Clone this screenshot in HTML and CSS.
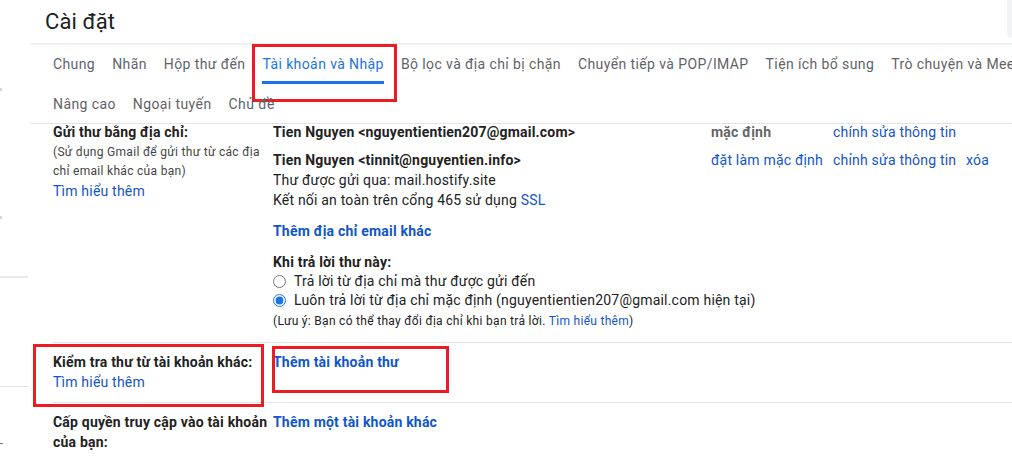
FILE: index.html
```html
<!DOCTYPE html>
<html lang="vi">
<head>
  <meta charset="UTF-8">
  <meta name="viewport" content="width=device-width, initial-scale=1.0">
  <title>Cài đặt</title>
  <link rel="stylesheet" href="styles.css">
</head>
<body>
  <div class="page">
    <!-- thanh bên trái (chỉ thấy mép) -->
    <aside class="rail">
      <span class="rail-dot rail-dot-top"></span>
      <span class="rail-dot rail-dot-mid"></span>
      <span class="rail-rule rail-rule-a"></span>
      <span class="rail-rule rail-rule-b"></span>
      <span class="rail-dash"></span>
    </aside>

    <main class="settings">
      <header class="settings-head">
        <h1>Cài đặt</h1>
        <div class="search-edge"></div>
      </header>

      <!-- các tab -->
      <nav class="tabs">
        <div class="tab-row">
          <a href="#" class="tab"><span class="tab-text">Chung</span></a>
          <a href="#" class="tab"><span class="tab-text">Nhãn</span></a>
          <a href="#" class="tab"><span class="tab-text">Hộp thư đến</span></a>
          <a href="#" class="tab tab-active"><span class="tab-text">Tài khoản và Nhập</span></a>
          <a href="#" class="tab"><span class="tab-text">Bộ lọc và địa chỉ bị chặn</span></a>
          <a href="#" class="tab"><span class="tab-text">Chuyển tiếp và POP/IMAP</span></a>
          <a href="#" class="tab"><span class="tab-text">Tiện ích bổ sung</span></a>
          <a href="#" class="tab"><span class="tab-text">Trò chuyện và Meet</span></a>
        </div>
        <div class="tab-row">
          <a href="#" class="tab"><span class="tab-text">Nâng cao</span></a>
          <a href="#" class="tab"><span class="tab-text">Ngoại tuyến</span></a>
          <a href="#" class="tab"><span class="tab-text">Chủ đề</span></a>
        </div>
      </nav>

      <!-- Gửi thư bằng địa chỉ -->
      <section class="opt opt-send">
        <div class="opt-label">
          <b class="label-title">Gửi thư bằng địa chỉ:</b>
          <p class="label-hint">(Sử dụng Gmail để gửi thư từ các địa chỉ email khác của bạn)</p>
          <a href="#" class="link link-block">Tìm hiểu thêm</a>
        </div>
        <div class="opt-body">
          <div class="acct acct-first">
            <div class="acct-name">Tien Nguyen &lt;nguyentientien207@gmail.com&gt;</div>
            <div class="acct-state">mặc định</div>
            <div><a href="#" class="link">chính sửa thông tin</a></div>
            <div></div>
          </div>
          <div class="acct">
            <div>
              <div class="acct-name">Tien Nguyen &lt;tinnit@nguyentien.info&gt;</div>
              <div>Thư được gửi qua: mail.hostify.site</div>
              <div>Kết nối an toàn trên cổng 465 sử dụng <a href="#" class="link">SSL</a></div>
            </div>
            <div><a href="#" class="link">đặt làm mặc định</a></div>
            <div><a href="#" class="link">chỉnh sửa thông tin</a></div>
            <div><a href="#" class="link">xóa</a></div>
          </div>
          <a href="#" class="link link-strong add-more">Thêm địa chỉ email khác</a>
          <div class="reply">
            <div class="reply-title">Khi trả lời thư này:</div>
            <label class="reply-option"><input type="radio" name="reply">Trả lời từ địa chỉ mà thư được gửi đến</label>
            <label class="reply-option"><input type="radio" name="reply" checked>Luôn trả lời từ địa chỉ mặc định (nguyentientien207@gmail.com hiện tại)</label>
            <p class="reply-note">(Lưu ý: Bạn có thể thay đổi địa chỉ khi bạn trả lời. <a href="#" class="link">Tìm hiểu thêm</a>)</p>
          </div>
        </div>
      </section>

      <!-- Kiểm tra thư từ tài khoản khác -->
      <section class="opt opt-check">
        <div class="opt-label marked">
          <b class="label-title">Kiểm tra thư từ tài khoản khác:</b>
          <a href="#" class="link link-block">Tìm hiểu thêm</a>
        </div>
        <div class="opt-body marked">
          <a href="#" class="link link-strong">Thêm tài khoản thư</a>
        </div>
      </section>

      <!-- Cấp quyền truy cập -->
      <section class="opt opt-grant">
        <div class="opt-label">
          <b class="label-title">Cấp quyền truy cập vào tài khoản của bạn:</b>
        </div>
        <div class="opt-body">
          <a href="#" class="link link-strong">Thêm một tài khoản khác</a>
        </div>
      </section>
    </main>
  </div>
</body>
</html>
```

FILE: styles.css
```css
/* reset */
* {
  margin: 0;
  padding: 0;
  box-sizing: border-box;
}
html,
body {
  overflow: hidden;
}
body {
  width: 1012px;
  height: 456px;
  font-family: Roboto, "Liberation Sans", Arial, sans-serif;
  font-size: 14px;
  letter-spacing: 0.2px;
  color: #222;
  background: #fff;
}
.page {
  display: flex;
  height: 456px;
}

/* thanh bên */
.rail {
  flex: none;
  width: 30px;
  display: flex;
  flex-direction: column;
  align-items: flex-start;
}
.rail span {
  display: block;
}
.rail-dot {
  width: 2px;
  height: 3px;
  background: #d5d5d5;
}
.rail-dot-top {
  margin-top: 88px;
}
.rail-dot-mid {
  margin-top: 125px;
}
.rail-rule {
  width: 28px;
  background: #e8e8e8;
}
.rail-rule-a {
  margin-top: 57px;
  height: 2px;
}
.rail-rule-b {
  margin-top: 108px;
  height: 1px;
  background: #e3e3e3;
}
.rail-dash {
  margin-top: 56px;
  width: 3px;
  height: 1px;
  background: #777;
}

/* nội dung */
.settings {
  flex: 1;
  min-width: 0;
}
.settings-head {
  display: flex;
  height: 43px;
  padding-left: 15px;
}
.settings-head h1 {
  font-size: 22px;
  font-weight: 400;
  line-height: 43px;
  letter-spacing: 0.1px;
  color: #202124;
}
.search-edge {
  margin-left: auto;
  width: 5px;
  height: 38px;
  background: #f1f3f4;
  border-radius: 0 0 0 8px;
}

/* tab */
.tabs {
  padding-left: 14.5px;
  border-top: 1px solid #eceff1;
  border-bottom: 1px solid #e3e3e3;
  box-shadow: inset 0 2px 2px -1px rgba(60, 64, 67, 0.08);
}
.tab-row {
  display: flex;
  height: 40px;
  white-space: nowrap;
}
.tab-row + .tab-row {
  height: 39px;
}
.tab {
  position: relative;
  flex: none;
  padding: 0 8.5px;
  line-height: 40px;
  letter-spacing: 0.4px;
  color: #5f6368;
  text-decoration: none;
}
.tab-text {
  display: block;
  height: 40px;
}
.tab-active {
  color: #1a73e8;
}
.tab-active .tab-text {
  border-bottom: 3px solid #1a73e8;
}

/* khung đỏ đánh dấu */
.tab-active::after,
.marked::after {
  content: "";
  position: absolute;
  border: 3px solid #ec1c24;
  pointer-events: none;
}
.tab-active::after {
  left: -2px;
  right: -5px;
  top: 0;
  height: 52px;
}
.marked {
  position: relative;
}
.opt-check .opt-label::after {
  left: -20px;
  top: -8px;
  width: 225px;
  height: 57px;
}
.opt-check .opt-body::after {
  left: -1px;
  top: -6px;
  width: 171px;
  height: 41px;
}

/* các mục cài đặt */
.opt {
  display: grid;
  grid-template-columns: 220px 1fr;
  margin-left: 23px;
  line-height: 20px;
}
.opt + .opt {
  border-top: 1px solid #e3e3e3;
}
.opt-send {
  padding-bottom: 11px;
}
.opt-check {
  padding: 9px 0 10px;
}
.opt-grant {
  padding-top: 9px;
}
.label-title {
  display: block;
  font-weight: bold;
}
.opt-send .label-title {
  line-height: 16px;
}
.label-hint {
  margin-top: 3px;
  font-size: 12px;
  line-height: 19px;
  letter-spacing: 0.3px;
  color: #444;
}
.link {
  color: #15c;
  text-decoration: none;
}
.link-block {
  display: block;
}
.link-strong {
  font-weight: bold;
}

/* tài khoản gửi */
.acct {
  display: grid;
  grid-template-columns: 438px 122px 133px auto;
  white-space: nowrap;
}
.acct-first {
  line-height: 16px;
}
.acct + .acct {
  margin-top: 10px;
}
.acct-name {
  font-weight: bold;
}
.acct-state {
  font-weight: bold;
  color: #666;
}
.add-more {
  display: block;
  margin-top: 11px;
}

/* khi trả lời */
.reply {
  margin-top: 11px;
}
.reply-title {
  font-weight: bold;
}
.reply-option {
  display: flex;
  align-items: center;
  line-height: 19px;
}
.reply-option input {
  width: 13px;
  height: 13px;
  margin: 0 8px 0 0;
  accent-color: #1a73e8;
}
.reply-note {
  margin-top: 1px;
  font-size: 12px;
  letter-spacing: 0.3px;
}
```
